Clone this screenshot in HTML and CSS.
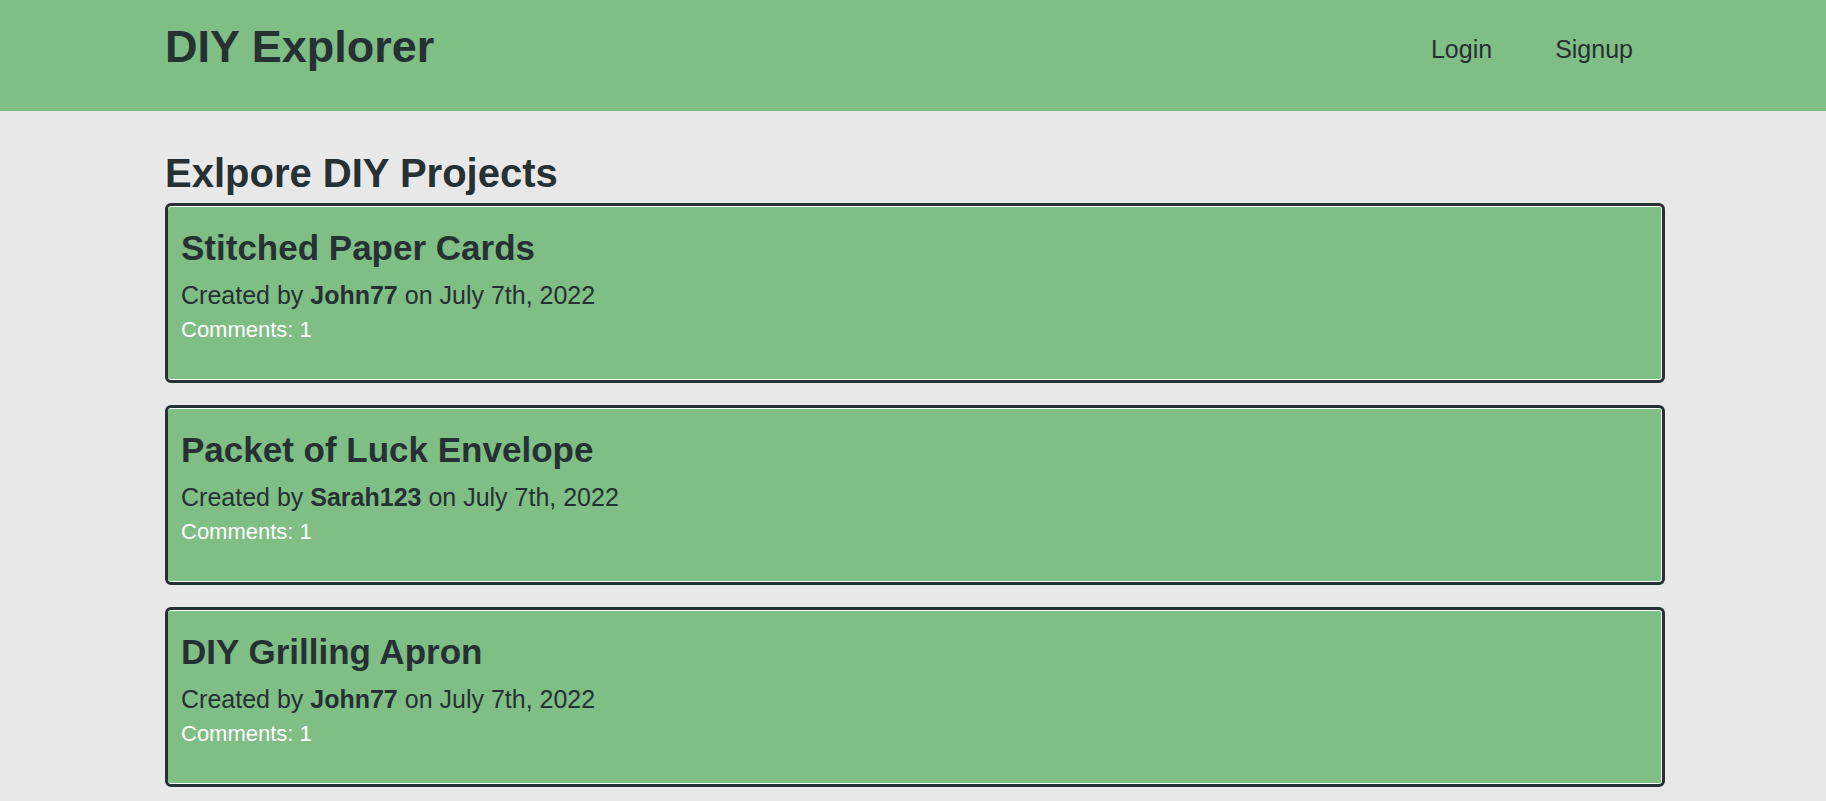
FILE: index.html
```html
<!DOCTYPE html>
<html lang="en">
<head>
<meta charset="utf-8">
<title>DIY Explorer</title>
<link rel="stylesheet" href="styles.css">
</head>
<body>
<header class="site-header">
  <div class="container header-inner">
    <h1 class="brand">DIY Explorer</h1>
    <nav class="nav">
      <a class="nav-link" href="#">Login</a>
      <a class="nav-link" href="#">Signup</a>
    </nav>
  </div>
</header>
<main class="container">
  <h1 class="page-title">Exlpore DIY Projects</h1>
  <section class="projects">
    <article class="card">
      <h2 class="card-title">Stitched Paper Cards</h2>
      <p class="card-meta">Created by <strong>John77</strong> on July 7th, 2022</p>
      <p class="card-comments">Comments: 1</p>
    </article>
    <article class="card">
      <h2 class="card-title">Packet of Luck Envelope</h2>
      <p class="card-meta">Created by <strong>Sarah123</strong> on July 7th, 2022</p>
      <p class="card-comments">Comments: 1</p>
    </article>
    <article class="card">
      <h2 class="card-title">DIY Grilling Apron</h2>
      <p class="card-meta">Created by <strong>John77</strong> on July 7th, 2022</p>
      <p class="card-comments">Comments: 1</p>
    </article>
  </section>
</main>
</body>
</html>
```
FILE: styles.css
```css
* { box-sizing: border-box; }

body {
  margin: 0;
  background: #e8e8e8;
  color: #263133;
  font-family: "Liberation Sans", Arial, sans-serif;
}

.container {
  width: 1504px;
  margin: 0 auto;
  padding-left: 4px;
}

.site-header {
  background: #7fbe85;
  height: 111px;
}

.header-inner {
  display: flex;
  justify-content: space-between;
  align-items: flex-start;
}

.brand {
  margin: 0;
  padding-top: 20px;
  font-size: 45px;
  line-height: 54px;
  font-weight: 700;
}

.nav {
  display: flex;
  gap: 63px;
  padding-top: 34px;
  padding-right: 32px;
}

.nav-link {
  font-size: 25px;
  line-height: 30px;
  color: #263133;
  text-decoration: none;
}

.page-title {
  margin: 38px 0 6px;
  font-size: 40px;
  line-height: 48px;
  font-weight: 700;
}

.card {
  background: #7fbe85;
  border: 3px solid #263133;
  border-radius: 6px;
  box-shadow: inset 0 1px 0 #ffffff, inset -1px 0 0 #ffffff, inset 0 -1px 0 #ffffff;
  padding: 21px 13px 37px;
  margin-bottom: 22px;
}

.card-title {
  margin: 0 0 11px;
  font-size: 35px;
  line-height: 42px;
  font-weight: 700;
}

.card-meta {
  margin: 0 0 7px;
  font-size: 25px;
  line-height: 30px;
}

.card-comments {
  margin: 0;
  font-size: 22px;
  line-height: 26px;
  color: #ffffff;
}
```
